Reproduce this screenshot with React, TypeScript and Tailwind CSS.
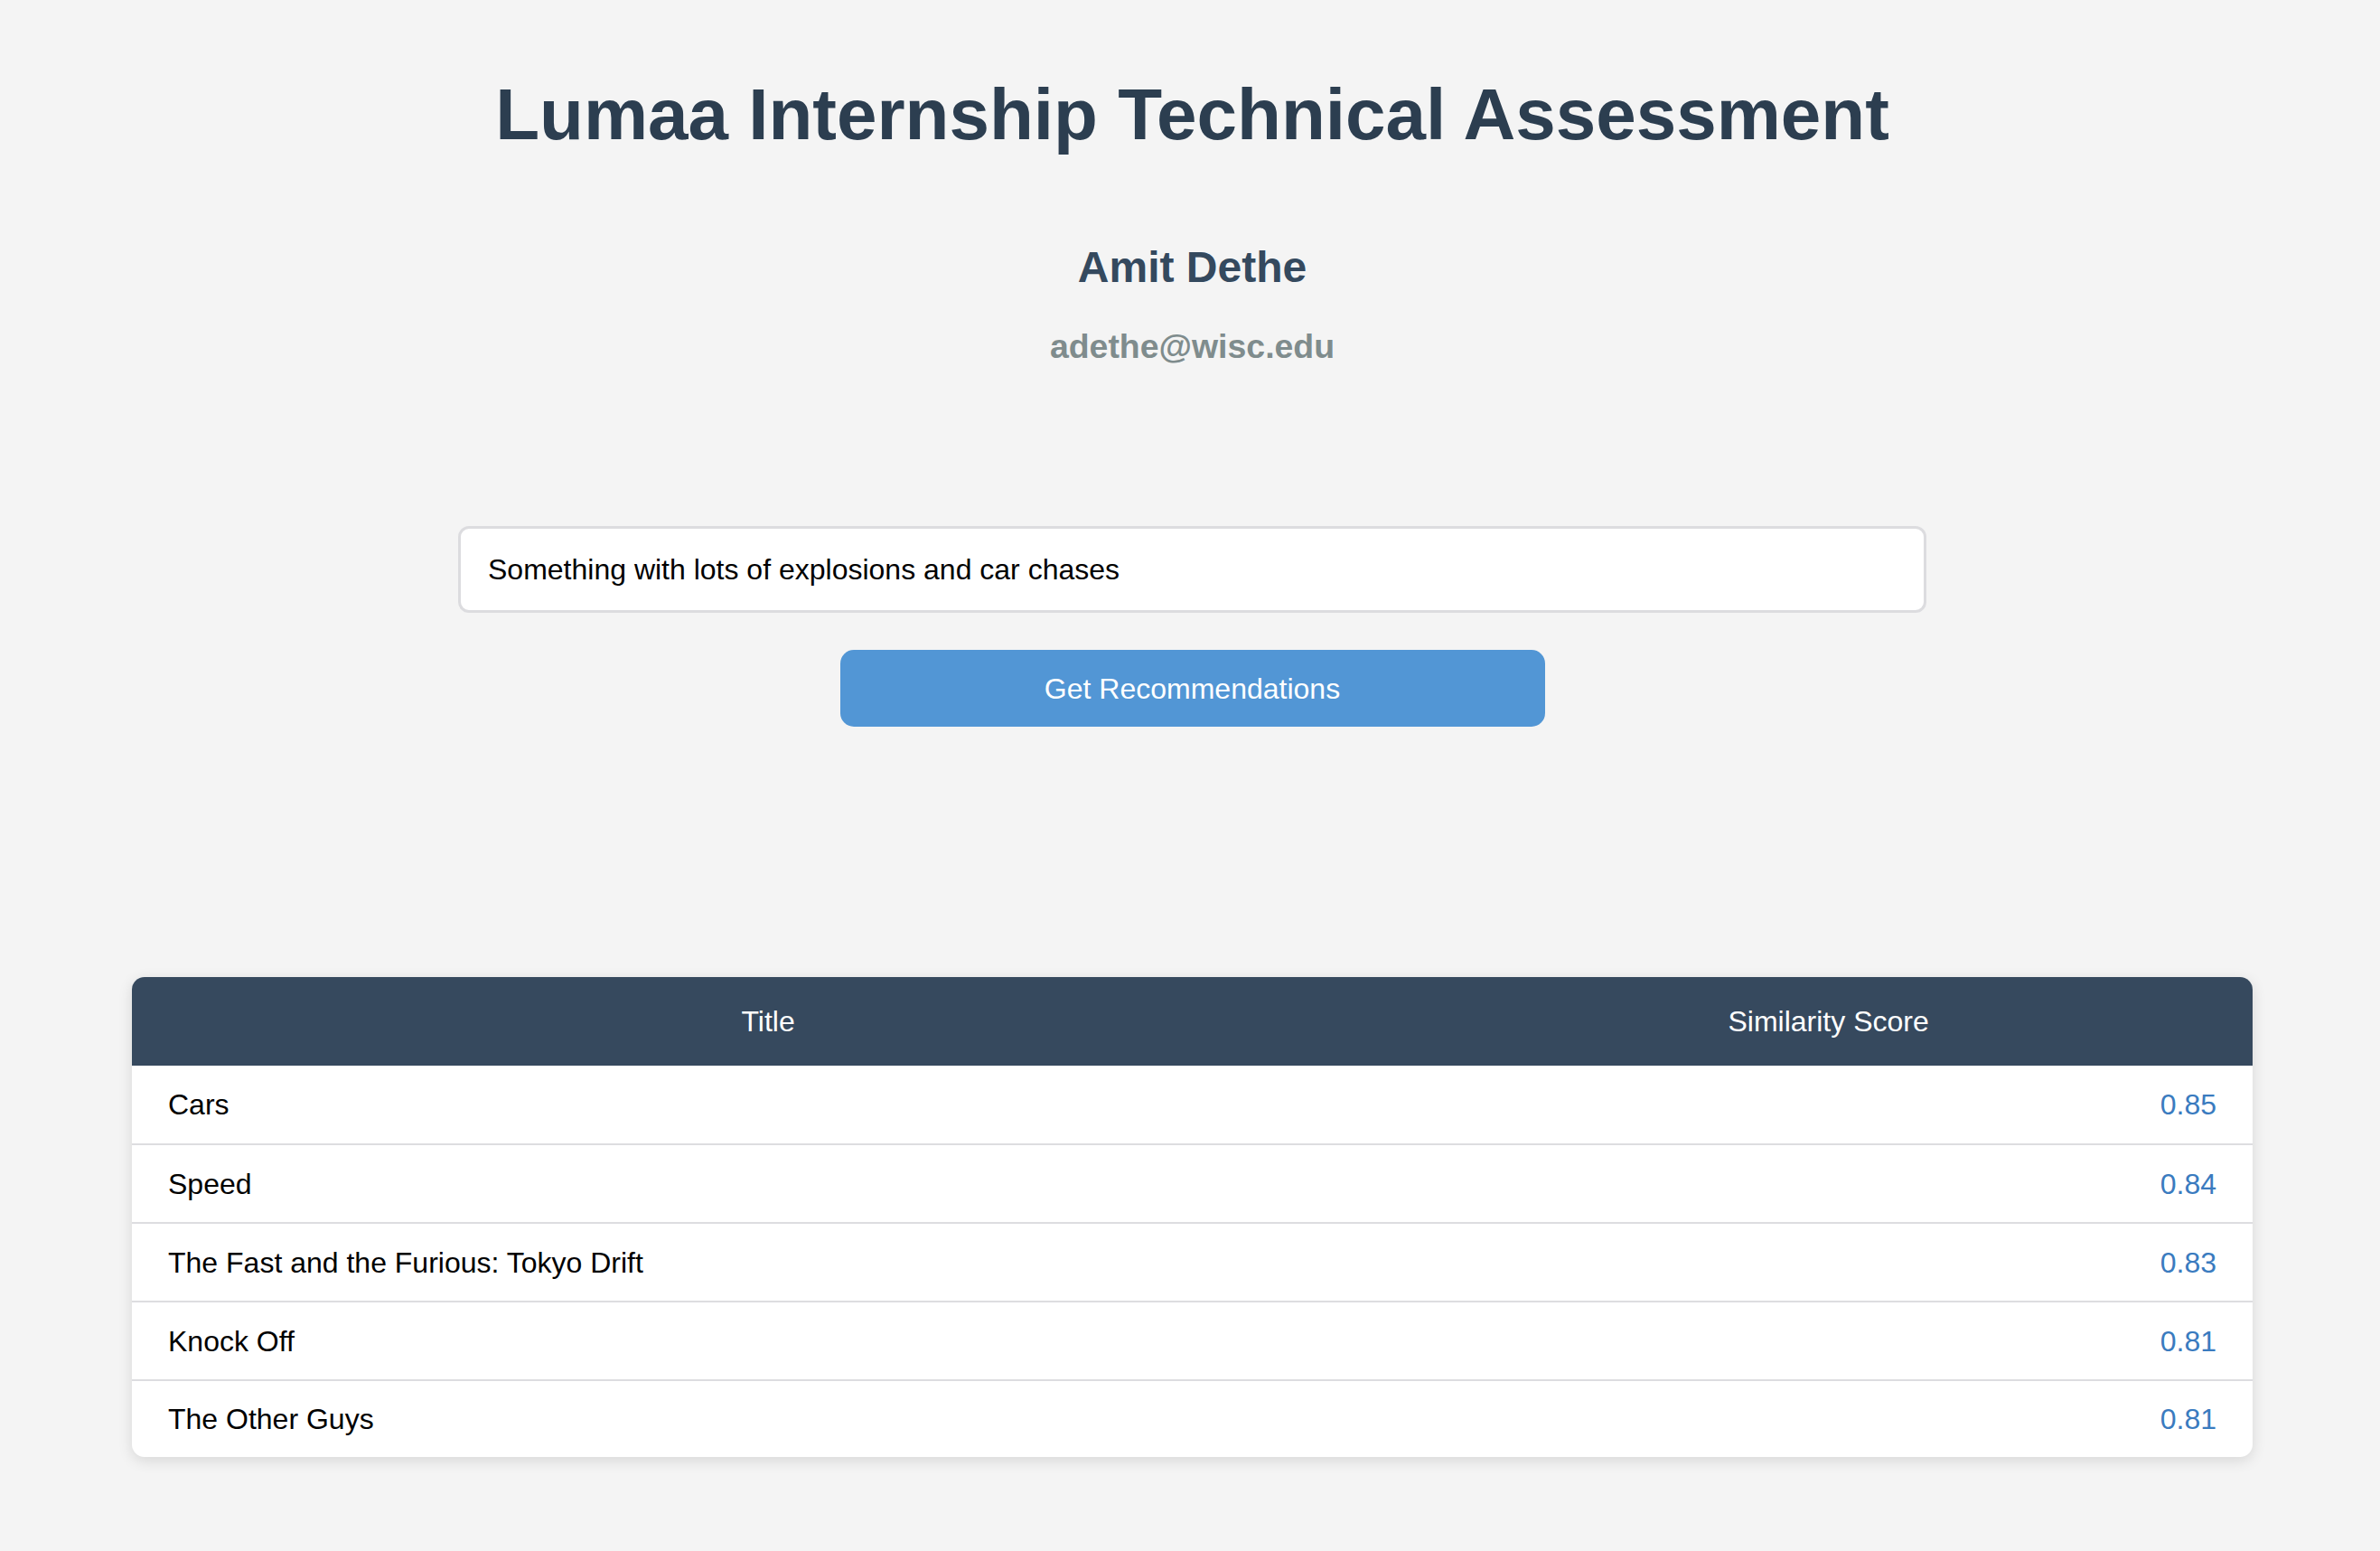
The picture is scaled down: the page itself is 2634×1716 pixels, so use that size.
import { useState } from 'react';

const recommendations = [
  { title: 'Cars', score: 0.85 },
  { title: 'Speed', score: 0.84 },
  { title: 'The Fast and the Furious: Tokyo Drift', score: 0.83 },
  { title: 'Knock Off', score: 0.81 },
  { title: 'The Other Guys', score: 0.81 },
];

function App() {
  const [query, setQuery] = useState('Something with lots of explosions and car chases');

  return (
    <div className="min-h-screen bg-[#f4f4f4] font-['Liberation_Sans',Arial,sans-serif] flex flex-col items-center pl-[5px] pb-[100px]">
      <h1 className="pt-[81px] text-[80px] leading-[92px] font-bold text-[#2c3e50]">
        Lumaa Internship Technical Assessment
      </h1>
      <h2 className="mt-[95px] text-[48px] leading-[55px] font-bold text-[#34495e]">Amit Dethe</h2>
      <h3 className="mt-[39px] text-[37.44px] leading-[43px] font-bold text-[#7f8c8d]">adethe@wisc.edu</h3>

      <input
        type="text"
        value={query}
        onChange={e => setQuery(e.target.value)}
        className="mt-[177px] w-[1625px] h-[96px] px-[30px] bg-white border-[3px] border-[#dcdcdf] rounded-[12px] text-[32px] text-black outline-none"
      />

      <button className="mt-[41px] w-[780px] h-[85px] rounded-[15px] bg-[#5296d5] text-white text-[32px]">
        Get Recommendations
      </button>

      <div className="mt-[277px] w-[2347px] rounded-[14px] overflow-hidden bg-white shadow-[0_4px_16px_rgba(0,0,0,0.12)]">
        <table className="w-full table-fixed border-collapse">
          <colgroup>
            <col className="w-[60%]" />
            <col className="w-[40%]" />
          </colgroup>
          <thead>
            <tr className="bg-[#36495e] h-[98px]">
              <th className="font-normal text-white text-[32px] text-center">Title</th>
              <th className="font-normal text-white text-[32px] text-center">Similarity Score</th>
            </tr>
          </thead>
          <tbody>
            {recommendations.map((rec, i) => (
              <tr
                key={rec.title}
                className={i < recommendations.length - 1 ? 'h-[87px] border-b-[2px] border-[#dddde0]' : 'h-[85px]'}
              >
                <td className="px-[40px] text-[32px] text-black text-left">{rec.title}</td>
                <td className="px-[40px] text-[32px] text-[#3a7bbf] text-right">{rec.score.toFixed(2)}</td>
              </tr>
            ))}
          </tbody>
        </table>
      </div>
    </div>
  );
}

export default App;
